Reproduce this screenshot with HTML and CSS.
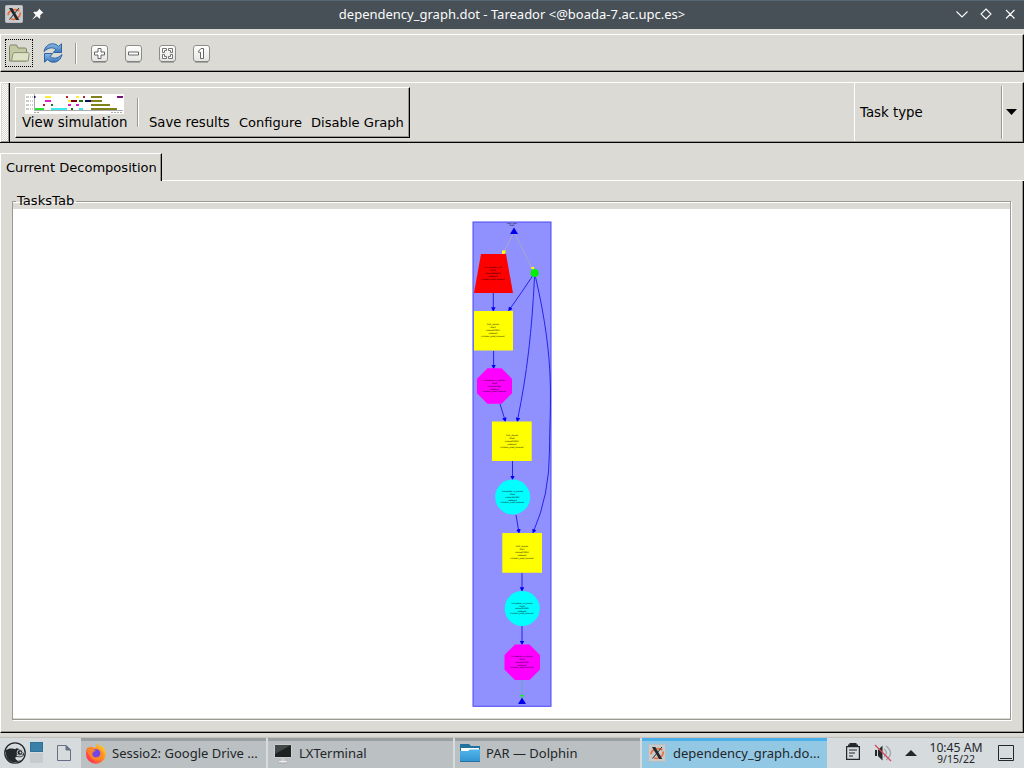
FILE: index.html
```html
<!DOCTYPE html>
<html lang="en">
<head>
<meta charset="utf-8">
<title>dependency_graph.dot - Tareador</title>
<link rel="stylesheet" href="styles.css">
</head>
<body>
<svg class="defs" width="0" height="0">
  <defs>
    <linearGradient id="btn" x2="0" y2="1"><stop offset="0" stop-color="#fff"/><stop offset="1" stop-color="#e4e4e2"/></linearGradient>
    <linearGradient id="blue" x2="0" y2="1"><stop offset="0" stop-color="#8db8e4"/><stop offset="1" stop-color="#3b78bb"/></linearGradient>
    <linearGradient id="fold" x2="0" y2="1"><stop offset="0" stop-color="#53b5ea"/><stop offset="1" stop-color="#3193d1"/></linearGradient>
    <linearGradient id="fox" x1="1" x2="0" y2="1"><stop offset="0" stop-color="#ffe52e"/><stop offset=".45" stop-color="#ff8a20"/><stop offset="1" stop-color="#ff1762"/></linearGradient>
    <pattern id="dots" width="2" height="2" patternUnits="userSpaceOnUse"><path d="M0 0h1v1H0zM1 1h1v1H1z" fill="#fff"/></pattern>
    <symbol id="xlogo" viewBox="0 0 18 18">
      <rect x=".5" y=".5" width="17" height="17" rx="1" fill="#c8cbcd" stroke="#b9bdc0"/>
      <ellipse cx="9" cy="9.500" rx="6.200" ry="4.700" fill="none" stroke="#ef6a35" stroke-width="1.700" stroke-dasharray="13 5 14 4" transform="rotate(-18 9 9)"/>
      <path d="M4 3h3.300l7 12h-3.200z" fill="#24282b"/><path d="M14 3 4.500 14.500" stroke="#24282b"/>
    </symbol>
    <marker id="head" viewBox="0 0 4 4" refX="2" refY="2" markerWidth="4.500" markerHeight="4.500" markerUnits="userSpaceOnUse" orient="auto"><path d="M0 0 4 2 0 4z" fill="#0000f0"/></marker>
  </defs>
</svg>
<header class="titlebar">
  <svg class="app" width="18" height="18"><use href="#xlogo"/></svg>
  <svg class="pin" width="12" height="12" viewBox="0 0 12 12"><path d="M7 0.500 11.500 5l-1.300.2-2 2 .1 2.600-.9.900L4.900 8.200.6 11.500.4 11.300 3.700 7 1.300 4.600l.9-.9 2.600.1 2-2z" fill="#fcfcfc"/></svg>
  <span class="caption">dependency_graph.dot - Tareador &lt;@boada-7.ac.upc.es&gt;</span>
  <svg class="controls" width="64" height="14" viewBox="0 0 64 14" fill="none" stroke="#fcfcfc" stroke-width="1.100"><path d="M2.500 4.500 8 10l5.500-5.500M32 2l5 5-5 5-5-5zM52 3l8.500 8.500M60.500 3 52 11.500"/></svg>
</header>
<div class="toolbar">
  <span class="focus"><svg width="22" height="20" viewBox="0 0 22 20"><path d="M1.500 18V3.500l1-1.500h6l1.500 3h7.500l1 1v12z" fill="#c3c9a5" stroke="#7f8763"/><path d="M3.500 18 5 10.500l1-.9h14.500l.7.700-1 7.700z" fill="#dde2c7" stroke="#8b9370"/></svg></span>
  <svg class="refresh" width="20" height="20" viewBox="0 0 20 20" fill="url(#blue)" stroke="#23599b" stroke-width=".9" stroke-linejoin="round"><path d="M1 8.500C2 3.500 5.500.700 9.700.800c2.600 0 4.300 1.100 5.800 2.600L18.500.800V9.500h-8.200l2.600-2.900C9.500 3.700 5.500 4.500 1 8.500z"/><path d="M19 11.500c-1 5-4.500 7.800-8.700 7.700-2.600 0-4.300-1.100-5.800-2.600l-3 2.600V10.500h8.200l-2.600 2.900c3.400 2.900 7.400 2.100 11.900-1.900z"/></svg>
  <i class="sep"></i>
  <svg class="tools" width="122" height="20" viewBox="0 0 122 20">
    <g fill="url(#btn)" stroke="#8c8c89"><rect x="1.500" y="1.500" width="16" height="16" rx="2.500"/><rect x="35.500" y="1.500" width="16" height="16" rx="2.500"/><rect x="69.500" y="1.500" width="16" height="16" rx="2.500"/><rect x="103.500" y="1.500" width="16" height="16" rx="2.500"/></g>
    <path d="M3 18h13M37 18h13M71 18h13M105 18h13" stroke="#777774"/>
    <g fill="#fff" stroke="#666"><path d="M8 4.500h3V8h3.500v3H11v3.500H8V11H4.500V8H8z"/><path d="M38.500 8h10v3h-10z"/><path d="M72.500 4.500h4v2h-2v2h-2zM78.500 4.500h4v4h-2v-2h-2zM72.500 10.500h2v2h2v2h-4zM80.500 10.500h2v4h-4v-2h2z" stroke-width=".9"/><path d="M108.500 7.200 111 4.500h2.500v10h-3V8.200h-2z"/></g>
  </svg>
</div>
<div class="toolbar second">
  <div class="grip"><svg width="6" height="57"><path d="M0 0h6v57H0z" fill="url(#dots)"/></svg></div>
  <div class="actions">
    <div class="view">
      <svg width="99" height="20" viewBox="0 0 99 20"><path fill="#fff" d="M0 0h99v20H0z"/>
        <g stroke="#999" stroke-width="1" stroke-dasharray="3 1 1 1"><path d="M1 3h7M1 7h7M1 11h7M1 15h7"/></g><path d="M9.500 0v17M9 16.500h89" stroke="#aaa"/><path d="M9 18.500h5M86 18.500h12" stroke="#aaa" stroke-dasharray="2 1"/>
        <g stroke-width="2"><path d="M9 3h1.500M60 7h6" stroke="#115"/><path d="M20 3h6M43 7h4M51 3h3" stroke="#f5ef35"/><path d="M41 3h2M58 3h2M18 11h2" stroke="#b22525"/><path d="M46 7h6" stroke="#800010"/><path d="M20 7h6M43 11h3M51 11h3" stroke="#d522cd"/><path d="M26 11h2M54 7h4M46 15h2" stroke="#187719"/><path d="M10 15h9" stroke="#27e326"/><path d="M26 15h16M54 15h4" stroke="#3be9ed"/><path d="M66 3h11M66 7h11M66 11h19M66 15h26" stroke="#81811c"/><path d="M92 3h6" stroke="#761078"/></g></svg>
      <span>View simulation</span>
    </div>
    <i class="sep"></i>
    <span class="save">Save results</span><span class="conf">Configure</span><span class="dis">Disable Graph</span>
  </div>
  <div class="combo"><span>Task type</span><i class="sep"></i><svg width="11" height="6"><path d="M0 0h11L5.500 6z"/></svg></div>
</div>
<div class="tabs"><div class="tab">Current Decomposition</div><div class="rule"></div></div>
<main class="page">
  <fieldset class="frame"><legend>TasksTab</legend>
    <div class="canvas">
      <svg class="graph" width="80" height="488" viewBox="472 220 80 488">
        <rect x="473" y="222" width="78" height="484.300" fill="#9090ff" stroke="#4848f4"/>
        <g fill="none" stroke="#aaa9bb" stroke-width=".9"><path d="M513 234 504 252M515 234l17 34"/></g>
        <path d="M502 250.500h4l-1.500 3.800-2.500-.5zM530.300 267.500l3.700-.8.500 4.200z" fill="#ff0"/>
        <g class="edges">
          <path d="M493.300 293V309.500"/><path d="M532.500 276Q522 292 509.500 309.500"/><path d="M534.500 277C532 330 527 374 517.500 420"/><path d="M535.500 277C556 365 549.500 405 549.500 450Q549.500 495 533.500 531.500"/><path d="M493.600 351V367"/><path d="M500 404l5 16"/><path d="M512.500 461v17"/><path d="M516 515l2.800 16.500"/><path d="M522 573v16.500"/><path d="M522 626v17"/>
        </g>
        <path d="M522 680v15" stroke="#58b4aa" stroke-width=".8"/><path d="M520 695h4l-2 3z" fill="#0f0"/>
        <path d="m514 227.500 4 6.500h-8zM522 697.500l4 6.500h-8z" fill="#0000e8"/>
        <circle cx="534.700" cy="273" r="4" fill="#00f000"/>
        <path d="M481 254h25l7 39h-39z" fill="red"/>
        <path d="M474 311h39v39.500h-39zM492 421.500h39.700V461H492zM502.300 533H542v39.700h-39.700z" fill="#ff0"/>
        <path d="M487.500 368.300h14l10.500 10.500v14.500l-10.500 10.500h-14L477 393.300v-14.500zM515 644.500h14.500L540 655v14.500L529.500 680H515l-10.500-10.500V655z" fill="#f0f"/>
        <circle cx="512.700" cy="497" r="17.500" fill="#0ff"/><circle cx="522.200" cy="608.500" r="17.500" fill="#0ff"/>
        <g class="tiny">
          <text x="512" y="223.500">start_plan</text><text x="512" y="226">ID=1</text>
          <text x="493" y="268">init_complex_grid</text><text x="493" y="271">ID=2</text><text x="493" y="274">cost=2526441</text><text x="493" y="277">nodes=1</text><text x="493" y="280">children_pred_tasks=0</text>
          <text x="493" y="325">ffts1_planes</text><text x="493" y="328">ID=3</text><text x="493" y="331">cost=433510</text><text x="493" y="334">nodes=1</text><text x="493" y="337">children_pred_tasks=0</text>
          <text x="494.500" y="381">transpose_xy_planes</text><text x="494.500" y="384">ID=4</text><text x="494.500" y="387">cost=361180</text><text x="494.500" y="389.500">nodes=1</text><text x="494.500" y="392">children_pred_tasks=0</text>
          <text x="512" y="436">ffts1_planes</text><text x="512" y="439">ID=5</text><text x="512" y="442">cost=433510</text><text x="512" y="445">nodes=1</text><text x="512" y="448">children_pred_tasks=0</text>
          <text x="512.500" y="492">transpose_zx_planes</text><text x="512.500" y="495">ID=6</text><text x="512.500" y="498">cost=361180</text><text x="512.500" y="500.500">nodes=1</text><text x="512.500" y="503">children_pred_tasks=0</text>
          <text x="522" y="547">ffts1_planes</text><text x="522" y="550">ID=7</text><text x="522" y="553">cost=433510</text><text x="522" y="556">nodes=1</text><text x="522" y="559">children_pred_tasks=0</text>
          <text x="522" y="604">transpose_zx_planes</text><text x="522" y="606.500">ID=8</text><text x="522" y="609">cost=361180</text><text x="522" y="611.500">nodes=1</text><text x="522" y="614">children_pred_tasks=0</text>
          <text x="522" y="657">transpose_xy_planes</text><text x="522" y="660">ID=9</text><text x="522" y="663">cost=361180</text><text x="522" y="665.500">nodes=1</text><text x="522" y="668">children_pred_tasks=0</text>
        </g>
      </svg>
    </div>
  </fieldset>
</main>
<footer class="taskbar">
  <svg class="launch" width="22" height="22" viewBox="0 0 22 22"><circle cx="11" cy="11" r="10.200" fill="#d6dbde" stroke="#22282b" stroke-width="1.300"/><path d="M1.500 8.500C4 6 9 6 11.500 7.300l.5-1.100c5 .5 8 3.300 8 6.400-.6 3-4.300 3.200-6.500 2.200-2.200 0-3 .8-1.500 2.700 1.700 2 4 1.200 5.500.500C13 21.500 5 21 2.500 15.500z" fill="#22282b"/><circle cx="16" cy="10.500" r="2.900" fill="#22282b" stroke="#d6dbde" stroke-width=".9"/><circle cx="16.500" cy="10.500" r="1" fill="#d6dbde"/><path d="M12.500 13.300q3 1.500 6 .200" stroke="#d6dbde" fill="none"/></svg>
  <div class="pager"><i></i><i></i></div>
  <svg class="doc" width="14" height="16" viewBox="0 0 14 16" fill="none" stroke="#647084"><path d="M.5.5h8.500l4.500 4.500v10.500H.5z"/><path d="M9 .5V5h4.500z" fill="#647084"/></svg>
  <div class="tasks">
    <div class="task"><svg width="22" height="22" viewBox="0 0 22 22"><path d="M12 1q2 2 3 4l1-2q5 4 4.700 9.500A9.700 9.300 0 0 1 1 12Q1 7 3.500 4v2.200L6 4.500q2 .2 3 1.500 3-1 3-5z" fill="url(#fox)"/><circle cx="10.800" cy="11.500" r="4.600" fill="#7546e5"/><path d="M2 8q5-3 9 1-3 0-3.500 2.500Q7 15 11 15.300c5 0 6-5 3.500-7.300q5 1 3.500 6-2 4.500-7.500 4.500Q5 17.500 2 8z" fill="#ff8b22" fill-opacity=".85"/></svg><span>Sessio2: Google Drive ...</span></div>
    <div class="task"><svg width="22" height="22" viewBox="0 0 22 22"><ellipse cx="11" cy="19.500" rx="5" ry="1.500" fill="#eee" stroke="#999" stroke-width=".7"/><path d="M9 15h4v4H9z" fill="#ccc"/><path d="M2.500 2.500h17v13h-17z" fill="#1e2322" stroke="#c9cdcd"/><path d="M3 3h16L3 12z" fill="#424946"/></svg><span>LXTerminal</span></div>
    <div class="task"><svg width="22" height="22" viewBox="0 0 22 22"><path d="M1 2h9l2 2h9v8H1z" fill="#21729f"/><path d="M2 6h18v4H2z" fill="#fff"/><path d="M1 9h8l2-1.500h10V20H1z" fill="url(#fold)"/><path d="M1 19.500h20" stroke="#2670a0"/></svg><span>PAR — Dolphin</span></div>
    <div class="task active"><svg class="x" width="18" height="18"><use href="#xlogo"/></svg><span>dependency_graph.do...</span></div>
  </div>
  <svg class="tray" width="76" height="22" viewBox="0 0 76 22"><path d="M1.600 4.600h12.800v12.800H1.600z" fill="none" stroke="#22282b" stroke-width="1.200"/><path d="M3 5V2.500h1.500V1h7v1.500H13V5zM4 7.500h8v1H4zM4 10.500h6v1H4zM4 13.500h4v1H4z" fill="#22282b"/><path d="M30 8h2v6h-2zM33 8l4.500-4.500v15L33 14z" fill="#22282b"/><path d="M39 7q5 4 0 8M41 4q9 7 0 14" fill="none" stroke="#a0a7ab" stroke-width="1.300"/><path d="m30 3 16 16" stroke="#d9455a" stroke-width="1.300"/><path d="M60 14h12l-6-6z" fill="#22282b"/></svg>
  <div class="clock"><b>10:45 AM</b><span>9/15/22</span></div>
  <svg class="desk" width="16" height="16" viewBox="0 0 16 16" fill="none" stroke="#22282b"><path d="M.5.5h15v15H.5zM2 13.500h12"/></svg>
</footer>
</body>
</html>
```
FILE: styles.css
```css
* { box-sizing: border-box; }
html, body { margin: 0; width: 1024px; height: 768px; overflow: hidden; }
body { display: flex; flex-direction: column; background: #dcdad5; color: #000; font: 13.333px "DejaVu Sans", sans-serif; }
svg { display: block; flex: none; }
.defs { position: absolute; }
.titlebar { height: 29px; flex: none; display: grid; grid-template-columns: 27px 35px 900px 1fr; align-items: center; padding: 0 0 2px 5px; background: #475057; border-top: 1px solid #566875; color: #fcfcfc; font: 13px/26px "Noto Sans", sans-serif; }
.caption { text-align: center; width: 890px; }
.controls { margin-left: -13px; }
.toolbar { height: 38px; flex: none; margin-top: 5px; display: flex; align-items: center; border: solid; border-width: 1px; border-color: #fff #000 #000 #fff; box-shadow: inset -1px -1px #9b9994; }
.focus { width: 28px; height: 28px; margin-left: 4px; border: 1px dotted #000; display: flex; align-items: center; justify-content: center; }
.refresh { margin-left: 10px; }
.sep { display: block; flex: none; width: 2px; border-left: 1px solid #9b9994; border-right: 1px solid #fff; }
.toolbar > .sep { height: 21px; margin-left: 12px; }
.tools { margin: 1px 0 0 12.500px; }
.second { height: 61px; margin-top: 10px; align-items: stretch; border-left: 0; }
.grip { width: 10px; padding: 1px 0 0 1px; border-left: 1px solid #fff; border-right: 1px solid #000; box-shadow: inset -1px 0 #9b9994; }
.actions { width: 395px; height: 51px; margin: 4px 0 0 5px; padding-left: 6px; border: 1px solid; border-color: #fff #000 #000 #fff; box-shadow: inset -1px -1px #9b9994; display: flex; white-space: nowrap; line-height: 17px; }
.view { width: 115px; display: flex; flex-direction: column; padding-top: 6px; }
.view svg { margin-left: 3px; }
.actions > .sep { height: 29px; margin-top: 10px; }
.actions > span { margin-top: 26px; }
.actions .save { margin-left: 10px; width: 90px; font-size: 13.200px; }
.actions .conf { width: 72px; font-size: 13px; }
.actions .dis { font-size: 13.100px; }
.combo { margin-left: auto; margin-bottom: 1px; width: 169px; border-left: 1px solid #fff; display: flex; align-items: center; }
.combo span { width: 146px; padding-left: 5px; }
.combo .sep { height: 53px; }
.combo svg { margin-left: 3px; }
.tabs { display: flex; height: 28px; flex: none; margin-top: 10px; }
.tab { width: 162px; padding-left: 5px; font-size: 13.050px; line-height: 27px; border: solid; border-width: 1px 1px 0; border-color: #fff #000 #fff #fff; box-shadow: inset -1px 0 #9b9994; white-space: nowrap; }
.rule { flex: 1; border-bottom: 1px solid #fff; }
.page { height: 552px; flex: none; padding: 12px 11px 0; border: solid; border-width: 0 1px 1px; border-color: #fff #000 #000 #fff; box-shadow: inset -1px -1px #9b9994; }
.frame { height: 527px; width: 999px; margin: 0; min-width: 0; padding: 0; border: 1px solid #9b9994; box-shadow: 1px 1px #fff, inset 0 1px #fff; }
.frame legend { height: 17px; line-height: 15px; margin-left: 3px; padding: 0 0 0 1px; width: 60px; font-size: 13.100px; }
.canvas { height: 509px; margin-top: -1px; background: #fff; display: flex; justify-content: center; padding: 11px 0 0 1px; }
.edges { fill: none; stroke: #1818e5; stroke-width: .9; }
.edges path { marker-end: url(#head); }
.tiny { font: 2.050px "DejaVu Sans", sans-serif; text-anchor: middle; fill: #000; }
.taskbar { height: 30px; flex: none; margin-top: 5px; display: flex; align-items: center; background: #d6dbde; box-shadow: 0 -1px 1px #c4c2be; color: #232629; font: 13px "Noto Sans", sans-serif; }
.launch { margin-left: 4px; }
.pager { margin-left: 4px; width: 13px; flex: none; display: grid; row-gap: 1px; margin-bottom: 1px; }
.pager i { height: 10px; background: #c6cbcc; }
.pager i:first-child { background: #3a80a8; border: 1px solid #2f7295; }
.doc { margin-left: 14px; }
.tasks { display: flex; flex: none; gap: 2px; margin-left: 10px; height: 30px; }
.task { width: 185px; padding-left: 4px; display: flex; align-items: center; background: #bbc0c3; box-shadow: inset 0 3px #999fa2; white-space: nowrap; }
.task span { margin-left: 5px; }
.active { background: #93c8e5; box-shadow: inset 0 3px #49b0ec; }
.task .x { margin: 0 2px; }
.tray { margin-left: 18px; }
.clock { width: 60px; flex: none; text-align: center; display: flex; flex-direction: column; font-size: 12.200px; line-height: 12px; margin-left: 5px; white-space: nowrap; }
.clock b { font-weight: 400; }
.clock span { font-size: 10.500px; line-height: 10px; }
.desk { margin-left: 12px; }
```
